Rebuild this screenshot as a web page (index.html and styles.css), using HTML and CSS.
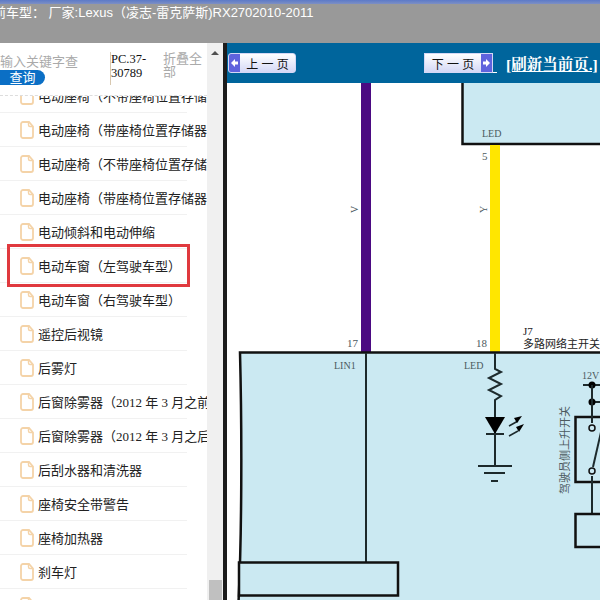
FILE: index.html
```html
<!DOCTYPE html>
<html lang="zh">
<head>
<meta charset="utf-8">
<title>维修手册</title>
<link rel="stylesheet" href="styles.css">
</head>
<body>
<svg class="defs" width="0" height="0" aria-hidden="true">
  <symbol id="doc" viewBox="0 0 14 18">
    <path d="M1 3a2 2 0 0 1 2-2h6l4 4.500v9.500a2 2 0 0 1-2 2h-8a2 2 0 0 1-2-2z" fill="#fff" stroke="#f4d3a8" stroke-width="1.800"/>
    <path d="M8.500 1v3a1.500 1.500 0 0 0 1.500 1.500h3" fill="none" stroke="#f4d3a8" stroke-width="1.400"/>
  </symbol>
</svg>
<div class="page">
  <header class="topbar">
    <div class="topstrip"></div>
    <div class="title">前车型： 厂家:Lexus（凌志-雷克萨斯)RX2702010-2011</div>
  </header>
  <div class="main">
    <aside class="side">
      <div class="sidecol">
        <div class="search">
          <div class="searchbox">
            <div class="hint">输入关键字查</div>
            <div class="querybtn">查询</div>
          </div>
          <div class="code">PC.37-30789</div>
          <div class="fold">折叠全部</div>
        </div>
        <div class="list">
          <div class="listinner">
            <div class="row"><svg class="doc"><use href="#doc"/></svg><span>电动座椅（不带座椅位置存储器</span></div>
            <div class="row"><svg class="doc"><use href="#doc"/></svg><span>电动座椅（带座椅位置存储器</span></div>
            <div class="row"><svg class="doc"><use href="#doc"/></svg><span>电动座椅（不带座椅位置存储器</span></div>
            <div class="row"><svg class="doc"><use href="#doc"/></svg><span>电动座椅（带座椅位置存储器</span></div>
            <div class="row"><svg class="doc"><use href="#doc"/></svg><span>电动倾斜和电动伸缩</span></div>
            <div class="row"><svg class="doc"><use href="#doc"/></svg><span>电动车窗（左驾驶车型）</span></div>
            <div class="row"><svg class="doc"><use href="#doc"/></svg><span>电动车窗（右驾驶车型）</span></div>
            <div class="row"><svg class="doc"><use href="#doc"/></svg><span>遥控后视镜</span></div>
            <div class="row"><svg class="doc"><use href="#doc"/></svg><span>后雾灯</span></div>
            <div class="row"><svg class="doc"><use href="#doc"/></svg><span>后窗除雾器（2012 年 3 月之前</span></div>
            <div class="row"><svg class="doc"><use href="#doc"/></svg><span>后窗除雾器（2012 年 3 月之后</span></div>
            <div class="row"><svg class="doc"><use href="#doc"/></svg><span>后刮水器和清洗器</span></div>
            <div class="row"><svg class="doc"><use href="#doc"/></svg><span>座椅安全带警告</span></div>
            <div class="row"><svg class="doc"><use href="#doc"/></svg><span>座椅加热器</span></div>
            <div class="row"><svg class="doc"><use href="#doc"/></svg><span>刹车灯</span></div>
            <div class="row"><svg class="doc"><use href="#doc"/></svg><span>前照灯</span></div>
          </div>
        </div>
      </div>
      <div class="scrollbar">
        <div class="uparrow"></div>
        <div class="thumb"></div>
      </div>
      <div class="highlight"></div>
    </aside>
    <section class="content">
      <div class="navbar">
        <div class="pagebtn prev"><span class="arrow">
          <svg width="11" height="20" viewBox="0 0 11 20"><path d="M2 10l4-4v2.500h3v3h-3v2.500z" fill="#fff"/></svg>
        </span><span class="btntext">上 一 页</span></div>
        <div class="pagebtn next"><span class="btntext">下 一 页</span><span class="arrow">
          <svg width="11" height="20" viewBox="0 0 11 20"><path d="M9 10l-4-4v2.500h-3v3h3v2.500z" fill="#fff"/></svg>
        </span></div>
        <span class="stub"></span>
        <a class="refresh">[刷新当前页.]</a>
      </div>
      <svg class="diagram" viewBox="227 83 373 517" width="373" height="517">
        <rect x="462.500" y="78" width="150" height="66" class="panel"/>
        <rect x="361" y="83" width="10" height="270" fill="#4b0a82"/>
        <rect x="490" y="145" width="10" height="208" fill="#ffe600"/>
        <path d="M240 352.500H612L612 612H238C242 540 242 430 240 352.500z" class="panel"/>
        <path d="M366 353V562" class="wire"/>
        <rect x="239" y="562.500" width="159" height="33" class="panel"/>
        <path d="M495 353V369l6 3-12 6 12 6-12 6 12 6-6 4V465" class="wire"/>
        <path d="M485 417h20l-10 17z" fill="#000"/>
        <path d="M486 434h18" class="wire"/>
        <path d="M478 466h34M484 473h21M491 481h7" class="wire"/>
        <path d="M509 426l9-5M509 436l9-5" class="wire thin"/>
        <path d="M522 416l-8 2 3 5zM524 424l-8 3 3 5z" fill="#000"/>
        <path d="M583 385H612M592 402H612" class="wire"/>
        <circle cx="592" cy="385" r="3.500"/>
        <circle cx="592" cy="402" r="3.500"/>
        <rect x="575.500" y="417" width="40" height="65" class="panel"/>
        <path d="M592 385V423M592 476V514" class="wire"/>
        <circle cx="592" cy="428" r="3" class="node"/>
        <circle cx="592" cy="471" r="3" class="node"/>
        <path d="M593 467L601 432" class="wire"/>
        <rect x="575.500" y="514" width="40" height="33" class="panel"/>
        <text x="482" y="137" class="label">LED</text>
        <text x="482" y="160" class="label num">5</text>
        <text x="476" y="347" class="label num">18</text>
        <text x="347" y="347" class="label num">17</text>
        <text x="334" y="369" class="label">LIN1</text>
        <text x="464" y="369" class="label">LED</text>
        <text x="582" y="379" class="label">12V</text>
        <text x="523" y="335" class="label dark">J7</text>
        <text x="523" y="348" class="label dark">多路网络主开关</text>
        <text transform="translate(358 213) rotate(-90)" class="label">V</text>
        <text transform="translate(487 213) rotate(-90)" class="label">Y</text>
        <text transform="translate(569 494) rotate(-90)" class="label num">驾驶员侧上升开关</text>
      </svg>
    </section>
  </div>
</div>
</body>
</html>
```
FILE: styles.css
```css
html, body {
  margin: 0;
  padding: 0;
}

body {
  width: 600px;
  height: 600px;
  overflow: hidden;
  background: #fff;
  font-family: "Liberation Sans", "Noto Sans CJK SC", sans-serif;
}

.defs {
  display: block;
  height: 0;
}

.page {
  display: flex;
  flex-direction: column;
  width: 600px;
  height: 600px;
}

.topbar {
  flex: 0 0 43px;
  background: #999;
  overflow: hidden;
}

.topstrip {
  height: 4px;
  background: linear-gradient(#5c7ac8, #7d8fc4);
}

.title {
  margin: 0 0 0 -7px;
  font-size: 13px;
  line-height: 17px;
  color: #fff;
  white-space: nowrap;
}

.main {
  flex: 1;
  display: flex;
  min-height: 0;
}

.side {
  position: relative;
  flex: 0 0 223px;
  display: flex;
  min-width: 0;
}

.sidecol {
  flex: 0 0 207px;
  display: flex;
  flex-direction: column;
  min-width: 0;
}

.search {
  flex: 0 0 52px;
  display: flex;
  overflow: hidden;
  background: #fff;
}

.searchbox {
  flex: 0 0 110px;
  padding-top: 11px;
}

.hint {
  font-size: 13px;
  line-height: 16px;
  color: #aaa;
  white-space: nowrap;
}

.querybtn {
  width: 45px;
  height: 15px;
  border-radius: 0 8px 8px 0;
  background: #0b6fc5;
  color: #fff;
  font-size: 13px;
  line-height: 15px;
  text-align: center;
}

.code {
  flex: 0 0 53px;
  box-sizing: border-box;
  font-family: "Liberation Serif", serif;
  font-size: 12.500px;
  line-height: 14px;
  color: #111;
  border-left: 1px solid #d8c8b0;
  margin-top: 9px;
  height: 33px;
}

.fold {
  flex: 1;
  padding-top: 9px;
  font-size: 13px;
  line-height: 13px;
  color: #aaa;
}

.list {
  flex: 1;
  overflow: hidden;
  min-height: 0;
  border-top: 1px dashed #ddd;
}

.listinner {
  margin-top: -17px;
}

.row {
  box-sizing: border-box;
  display: flex;
  align-items: center;
  gap: 4px;
  width: 187px;
  height: 34px;
  padding-left: 20px;
  border-bottom: 1px solid #f1f1f1;
  font-family: "Liberation Serif", "Noto Sans CJK SC", serif;
  font-size: 13px;
  color: #222;
  white-space: nowrap;
}

.doc {
  flex: 0 0 14px;
  width: 14px;
  height: 18px;
}

.scrollbar {
  flex: 0 0 16px;
  display: flex;
  flex-direction: column;
  justify-content: space-between;
  align-items: center;
  background: #f0f0f0;
}

.uparrow {
  margin-top: 8px;
  width: 0;
  height: 0;
  border-left: 4px solid transparent;
  border-right: 4px solid transparent;
  border-bottom: 4px solid #505050;
}

.thumb {
  width: 13px;
  height: 20px;
  background: #c0c0c0;
}

.highlight {
  position: absolute;
  left: 7px;
  top: 201px;
  width: 177px;
  height: 37px;
  border: 3px solid #e0393e;
}

.content {
  flex: 1;
  display: flex;
  flex-direction: column;
  min-width: 0;
  border-left: 4px solid #1c1c1c;
}

.navbar {
  flex: 0 0 40px;
  display: flex;
  align-items: center;
  background: #00659c;
  padding-left: 1px;
  overflow: hidden;
}

.pagebtn {
  display: flex;
  align-items: center;
  height: 20px;
  box-sizing: border-box;
  border: 1px solid #d5d8f5;
  border-radius: 3px;
  background: linear-gradient(#fff, #d4d8f6);
  font-size: 12px;
  color: #111;
  overflow: hidden;
}

.prev {
  width: 68px;
}

.next {
  width: 69px;
  margin-left: 128px;
  border-radius: 0;
}

.stub {
  align-self: center;
  width: 4px;
  height: 1px;
  margin-top: 19px;
  background: #fff;
}

.arrow {
  flex: 0 0 11px;
  height: 20px;
  background: #5f63dd;
}

.btntext {
  flex: 1;
  text-align: center;
  white-space: nowrap;
}

.refresh {
  margin-left: 9px;
  font-family: "Liberation Serif", "Noto Serif CJK SC", "Noto Sans CJK SC", serif;
  font-size: 15.500px;
  font-weight: bold;
  color: #fff;
  text-decoration: underline;
  white-space: nowrap;
}

.diagram {
  display: block;
  flex: 1;
  background: #fff;
}

.panel {
  fill: #cbe9f2;
  stroke: #111;
  stroke-width: 2.500;
}

.wire {
  fill: none;
  stroke: #1d2a2c;
  stroke-width: 2;
}

.thin {
  stroke-width: 1.500;
}

.node {
  fill: #cbe9f2;
  stroke: #111;
  stroke-width: 1.500;
}

.label {
  font-family: "Liberation Serif", "Noto Sans CJK SC", serif;
  font-size: 10px;
  fill: #4c5a5e;
}

.num {
  font-size: 11px;
}

.dark {
  fill: #222;
  font-size: 11px;
}
```
